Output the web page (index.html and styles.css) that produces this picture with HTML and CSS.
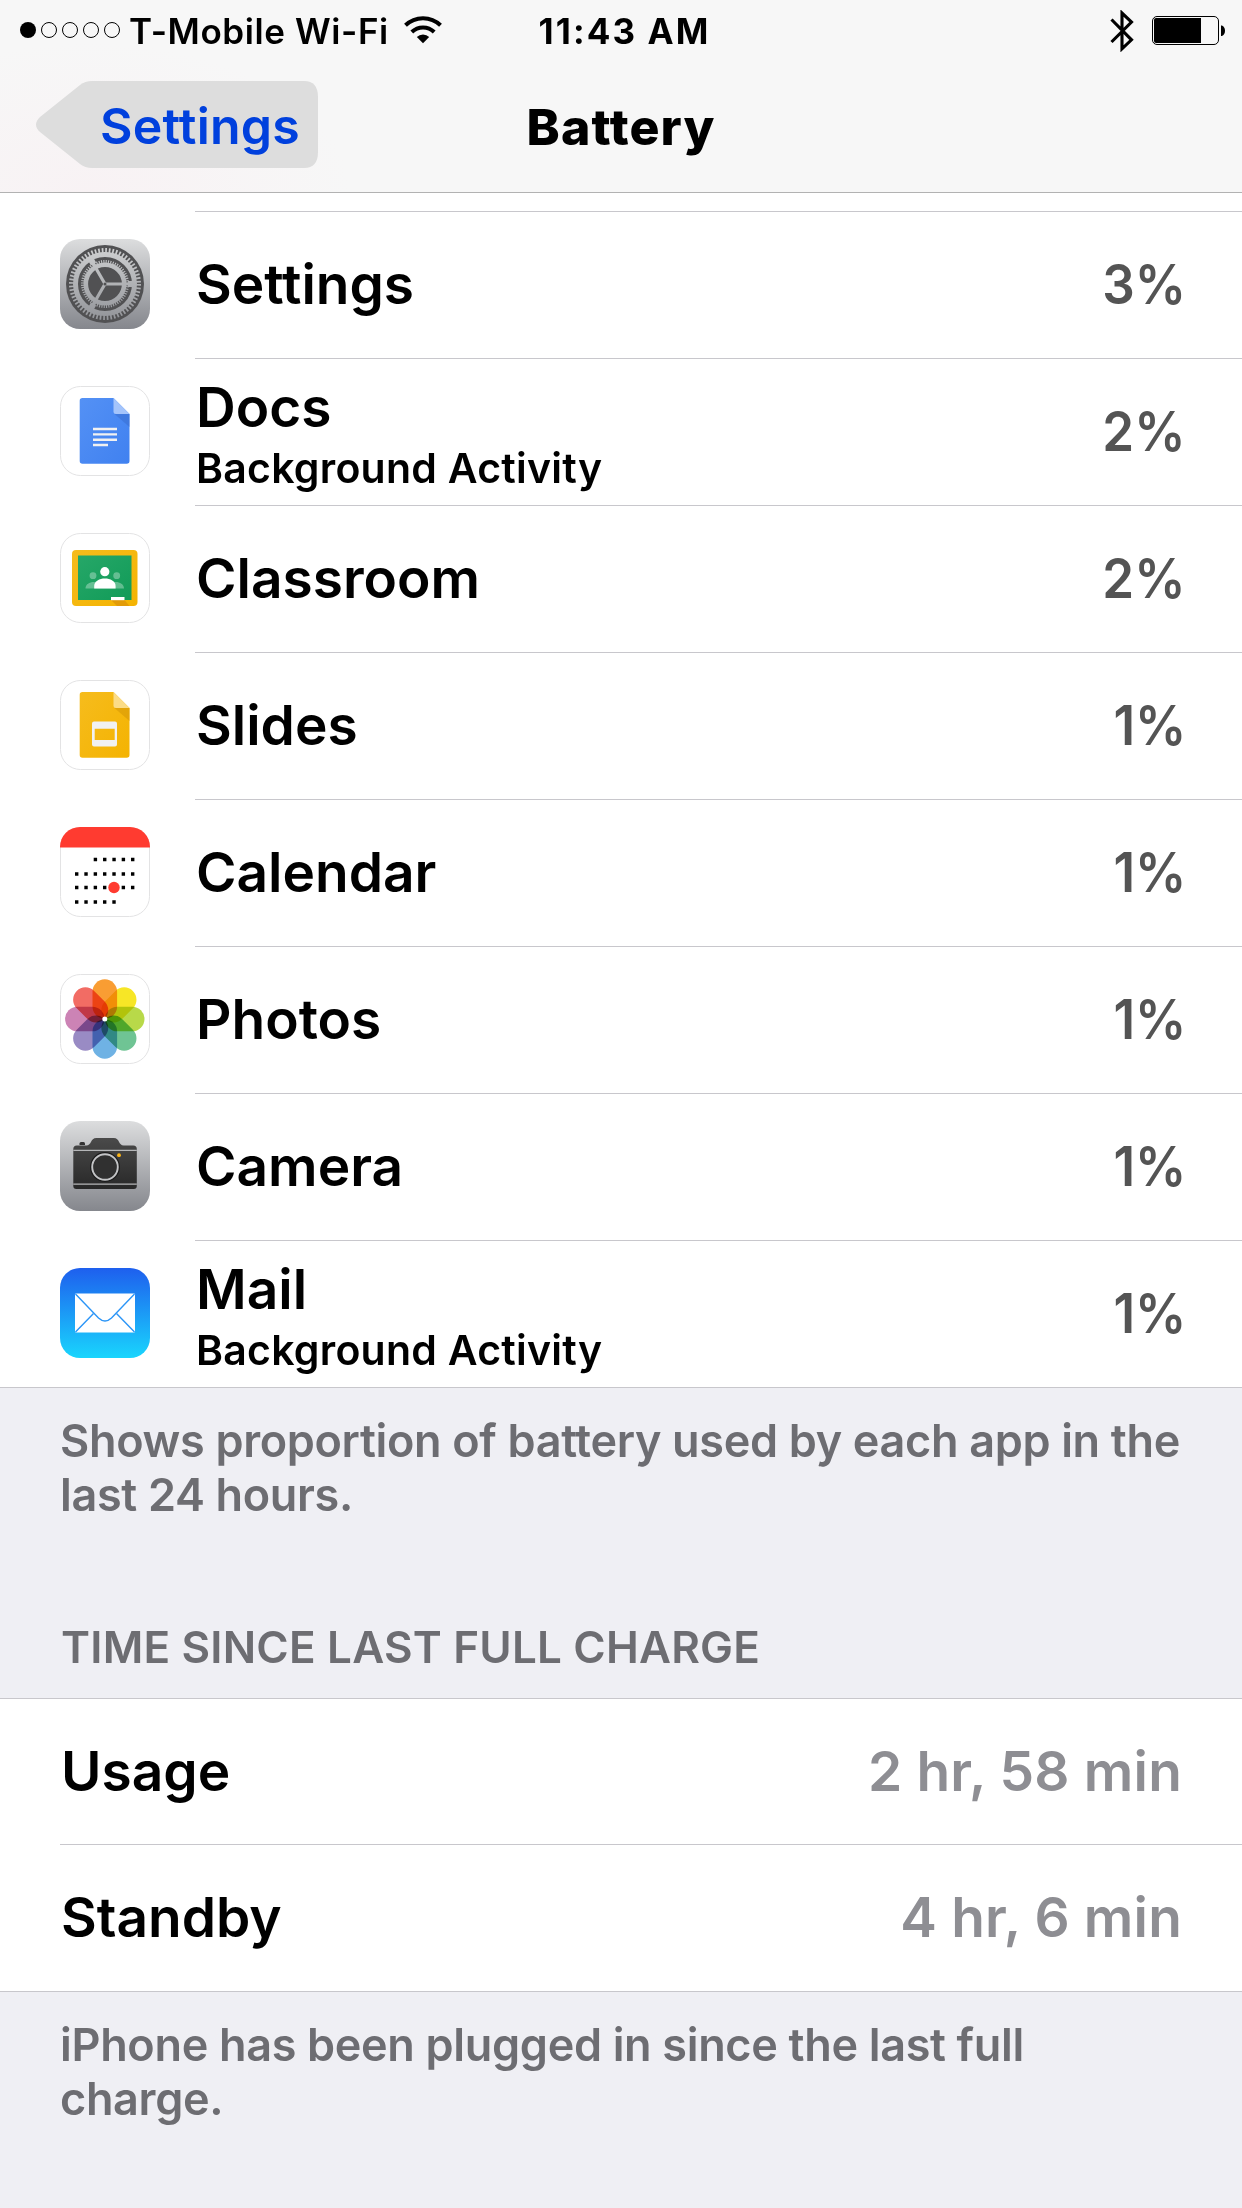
FILE: index.html
```html
<!DOCTYPE html>
<html lang="en">
  <head>
    <meta charset="UTF-8" />
    <title>Battery</title>
    <link rel="stylesheet" href="styles.css">
  </head>
  <body>
    <header class="top">
      <div class="status-bar">
        <div class="status-left">
          <svg class="signal" width="102" height="18" viewBox="0 0 102 18">
            <circle cx="9" cy="9" r="8" />
            <g fill="none" stroke="#000" stroke-width="1">
              <circle cx="30" cy="9" r="7.5" />
              <circle cx="51" cy="9" r="7.5" />
              <circle cx="72" cy="9" r="7.5" />
              <circle cx="93" cy="9" r="7.5" />
            </g>
          </svg>
          <span class="carrier">T-Mobile Wi-Fi</span>
          <svg class="wifi" width="38" height="28" viewBox="0 0 38 28">
            <g fill="none" stroke="#000" stroke-width="4">
              <path d="M1.5 9.3a25 25 0 0 1 35 0" />
              <path d="M7.8 16a16 16 0 0 1 22.4 0" />
            </g>
            <path d="M19 27.3l-6.2-6.3a8.8 8.8 0 0 1 12.4 0z" />
          </svg>
        </div>
        <span class="time">11:43 AM</span>
        <div class="status-right">
          <svg class="bluetooth" width="24" height="42" viewBox="0 0 24 42">
            <path d="M1.5 9.5l20 20.3-9.5 9V3l9.5 9-20 20" fill="none" stroke="#000" stroke-width="3.1" />
          </svg>
          <svg class="battery" width="74" height="30" viewBox="0 0 74 30">
            <rect x=".5" y=".5" width="66" height="28" rx="4.5" fill="none" stroke="#000" />
            <path d="M4 2h45v25H4a2 2 0 0 1-2-2V4a2 2 0 0 1 2-2z" />
            <path d="M69 9.500c5.300 0 5.300 10.500 0 10.500z" />
          </svg>
        </div>
      </div>
      <nav class="nav-bar">
        <a class="back">
          <svg class="back-shape" width="282" height="87" viewBox="0 0 282 87">
            <path d="M56 0H268Q282 0 282 16V71Q282 87 268 87H56Q49 87 44 83L4 51Q-4 43.500 4 36L44 4Q49 0 56 0Z" />
          </svg>
          <span class="back-label">Settings</span>
        </a>
        <h1 class="nav-title">Battery</h1>
      </nav>
    </header>

    <main>
      <ul class="apps">
        <li class="app">
          <svg class="icon" viewBox="0 0 90 90">
            <defs>
              <linearGradient id="gray" x1="0" y1="0" x2="0" y2="1">
                <stop offset="0" stop-color="#dcddde" />
                <stop offset="1" stop-color="#85878d" />
              </linearGradient>
              <linearGradient id="metal" gradientUnits="userSpaceOnUse" x1="0" y1="5" x2="0" y2="85">
                <stop offset="0" stop-color="#d2d3d4" />
                <stop offset="1" stop-color="#8f9196" />
              </linearGradient>
            </defs>
            <rect width="90" height="90" rx="20" fill="url(#gray)" />
            <circle cx="45" cy="45" r="39" fill="#515153" />
            <g fill="none" stroke="url(#metal)">
              <circle cx="45" cy="45" r="33.500" stroke-width="5" stroke-dasharray="1.7 1.808" />
              <circle cx="45" cy="45" r="29.500" stroke-width="5" />
              <circle cx="45" cy="45" r="22.500" stroke-width="3" stroke-dasharray="1.1 1.256" />
              <circle cx="45" cy="45" r="19.200" stroke-width="4.600" />
              <path d="M45 45.010L73 45M45 45L31 20.700M45 45L31 69.300" stroke-width="3.200" />
              <path d="M68 45h6M33.500 25l-3-5.200M33.500 65l-3 5.200" stroke-width="6" />
            </g>
            <circle cx="45" cy="45" r="1.500" fill="#515153" />
          </svg>
          <div class="app-text"><span class="name">Settings</span></div>
          <span class="percent">3%</span>
        </li>
        <li class="app">
          <svg class="icon" viewBox="0 0 90 90">
            <defs>
              <linearGradient id="docs" x1="0" y1="0" x2="1" y2="1">
                <stop offset="0" stop-color="#5491f5" />
                <stop offset="1" stop-color="#4081f0" />
              </linearGradient>
            </defs>
            <rect class="plate" x=".5" y=".5" width="89" height="89" rx="20" />
            <path d="M22.500 12H53.500L69.500 28V75a2.800 2.800 0 0 1-2.800 2.800H22.500a2.800 2.800 0 0 1-2.800-2.800V14.800A2.800 2.800 0 0 1 22.500 12z" fill="url(#docs)" />
            <path d="M54.500 28h15v13z" fill="#3a70d2" opacity=".6" />
            <path d="M53.500 12l16 16H56a2.500 2.500 0 0 1-2.500-2.500z" fill="#a4c4fb" />
            <path d="M33 43h24M33 48.400h24M33 53.800h24M33 59h15" stroke="#f1f1f1" stroke-width="2.400" />
          </svg>
          <div class="app-text">
            <span class="name">Docs</span>
            <span class="detail">Background Activity</span>
          </div>
          <span class="percent">2%</span>
        </li>
        <li class="app">
          <svg class="icon" viewBox="0 0 90 90">
            <defs>
              <linearGradient id="board" x1="0" y1="0" x2="1" y2="1">
                <stop offset="0" stop-color="#26a768" />
                <stop offset="1" stop-color="#119b58" />
              </linearGradient>
              <linearGradient id="amber" x1="0" y1="0" x2="1" y2="1">
                <stop offset="0" stop-color="#f6bc1d" />
                <stop offset="1" stop-color="#f4b301" />
              </linearGradient>
            </defs>
            <rect class="plate" x=".5" y=".5" width="89" height="89" rx="20" />
            <rect x="12" y="17" width="65.500" height="56" rx="4" fill="url(#amber)" />
            <path d="M51 67h13.500l5 6H57z" fill="#e29b08" />
            <rect x="18" y="22.500" width="53.500" height="44.500" fill="url(#board)" />
            <g fill="#fff">
              <g opacity=".32">
                <circle cx="33" cy="42.700" r="3.400" />
                <circle cx="56.700" cy="42.700" r="3.400" />
                <path d="M25.500 55.500c0-6 8-8 13-5.500h12.500c5-2.500 13-.5 13 5.500z" />
              </g>
              <circle cx="44.800" cy="38.700" r="4.600" />
              <path d="M34.200 55.500V53c0-10 21.400-10 21.400 0v2.500z" />
              <path d="M51 64h13.500v3.200H51z" />
            </g>
          </svg>
          <div class="app-text"><span class="name">Classroom</span></div>
          <span class="percent">2%</span>
        </li>
        <li class="app">
          <svg class="icon" viewBox="0 0 90 90">
            <rect class="plate" x=".5" y=".5" width="89" height="89" rx="20" />
            <path d="M22.500 12H53.500L69.500 28V75a2.800 2.800 0 0 1-2.800 2.800H22.500a2.800 2.800 0 0 1-2.800-2.800V14.800A2.800 2.800 0 0 1 22.500 12z" fill="url(#amber)" />
            <path d="M54.500 28h15v13z" fill="#dc9d08" opacity=".7" />
            <path d="M53.500 12l16 16H56a2.500 2.500 0 0 1-2.500-2.500z" fill="#fbdc87" />
            <path d="M34 41.500h21a2 2 0 0 1 2 2V64.500a2 2 0 0 1-2 2H34a2 2 0 0 1-2-2V43.500a2 2 0 0 1 2-2zM34.700 48.700v11.300h20V48.700z" fill="#f1f1f1" fill-rule="evenodd" />
          </svg>
          <div class="app-text"><span class="name">Slides</span></div>
          <span class="percent">1%</span>
        </li>
        <li class="app">
          <svg class="icon" viewBox="0 0 90 90">
            <rect class="plate" x=".5" y=".5" width="89" height="89" rx="20" />
            <path d="M0 20A20 20 0 0 1 20 0H70A20 20 0 0 1 90 20V20.500H0z" fill="#ff3b30" />
            <g fill="none" stroke="#000" stroke-width="3.400" stroke-dasharray="3.400 5.930">
              <path d="M33.700 32.500H76" />
              <path d="M15 47H76" />
              <path d="M15 60.500H76" />
              <path d="M15 75H58" />
            </g>
            <circle cx="54" cy="60.500" r="6.200" fill="#fff" />
            <circle cx="54" cy="60.500" r="5.700" fill="#ff3b30" />
          </svg>
          <div class="app-text"><span class="name">Calendar</span></div>
          <span class="percent">1%</span>
        </li>
        <li class="app">
          <svg class="icon" viewBox="0 0 90 90">
            <rect class="plate" x=".5" y=".5" width="89" height="89" rx="20" />
            <g class="petals" transform="translate(44.800 45)">
              <rect x="-12.300" y="-39.700" width="24.600" height="39.500" rx="12.300" fill="#f99d33" />
              <rect x="-12.300" y="-39.700" width="24.600" height="39.500" rx="12.300" fill="#f7e626" transform="rotate(45)" />
              <rect x="-12.300" y="-39.700" width="24.600" height="39.500" rx="12.300" fill="#b8d949" transform="rotate(90)" />
              <rect x="-12.300" y="-39.700" width="24.600" height="39.500" rx="12.300" fill="#6fc494" transform="rotate(135)" />
              <rect x="-12.300" y="-39.700" width="24.600" height="39.500" rx="12.300" fill="#6fb2e4" transform="rotate(180)" />
              <rect x="-12.300" y="-39.700" width="24.600" height="39.500" rx="12.300" fill="#998bc4" transform="rotate(225)" />
              <rect x="-12.300" y="-39.700" width="24.600" height="39.500" rx="12.300" fill="#cc83b5" transform="rotate(270)" />
              <rect x="-12.300" y="-39.700" width="24.600" height="39.500" rx="12.300" fill="#f26c64" transform="rotate(315)" />
            </g>
            <circle cx="44.800" cy="45" r="2.500" fill="#fff" />
          </svg>
          <div class="app-text"><span class="name">Photos</span></div>
          <span class="percent">1%</span>
        </li>
        <li class="app">
          <svg class="icon" viewBox="0 0 90 90">
            <defs>
              <linearGradient id="camera" x1="0" y1="0" x2="0" y2="1">
                <stop offset="0" stop-color="#4a4a4a" />
                <stop offset="1" stop-color="#282828" />
              </linearGradient>
            </defs>
            <rect width="90" height="90" rx="20" fill="url(#gray)" />
            <path d="M19.500 24v-1.500q0-1.500 1.500-1.500h2.500q1.500 0 1.500 1.500V24z" fill="#333" />
            <path d="M13.300 28q0-3.500 3.500-3.500h9.500c5.500 0 4-7.500 10-7.500h17.500c6 0 4.500 7.500 10 7.500h9.500q3.500 0 3.500 3.500V65q0 3-3 3h-57.500q-3 0-3-3z" fill="url(#camera)" />
            <path d="M13.300 29.300h63.500M13.300 63.200h63.500" stroke="#b5b6b8" stroke-width="1.200" />
            <circle cx="45" cy="46" r="15" fill="#1c1c1c" />
            <circle cx="45" cy="46" r="12.800" fill="#303030" stroke="#c3c4c6" stroke-width="1.900" />
            <circle cx="59" cy="34.200" r="1.900" fill="#fdb515" />
          </svg>
          <div class="app-text"><span class="name">Camera</span></div>
          <span class="percent">1%</span>
        </li>
        <li class="app">
          <svg class="icon" viewBox="0 0 90 90">
            <defs>
              <linearGradient id="mail" x1="0" y1="0" x2="0" y2="1">
                <stop offset="0" stop-color="#1e5fee" />
                <stop offset="1" stop-color="#19d5fd" />
              </linearGradient>
            </defs>
            <rect width="90" height="90" rx="20" fill="url(#mail)" />
            <rect x="15" y="25.500" width="60" height="39" rx="1" fill="#fff" />
            <g fill="none" stroke="#2b95f7" stroke-width="1.400">
              <path d="M15.500 26L38.500 50q6.500 6 13 0L74.500 26" />
              <path d="M15.500 64L33.500 45.500M74.500 64L56.500 45.500" />
            </g>
          </svg>
          <div class="app-text">
            <span class="name">Mail</span>
            <span class="detail">Background Activity</span>
          </div>
          <span class="percent">1%</span>
        </li>
      </ul>
      <p class="note">Shows proportion of battery used by each app in the last 24 hours.</p>

      <h2 class="section-title">TIME SINCE LAST FULL CHARGE</h2>
      <dl class="charge">
        <div class="charge-row">
          <dt class="name">Usage</dt>
          <dd class="value">2 hr, 58 min</dd>
        </div>
        <div class="charge-row">
          <dt class="name">Standby</dt>
          <dd class="value">4 hr, 6 min</dd>
        </div>
      </dl>
      <p class="note">iPhone has been plugged in since the last full charge.</p>
    </main>
  </body>
</html>
```

FILE: styles.css
```css
* {
  box-sizing: border-box;
}
body {
  margin: 0;
  min-height: 2208px;
  background-color: #efeff4;
  color: #000;
  font-family: Inter, "Liberation Sans", sans-serif;
  font-weight: 600;
}
h1, h2, p, ul, dl, dd {
  margin: 0;
  padding: 0;
}
.top {
  height: 193px;
  border-bottom: 1px solid #b2b2b2;
  background: radial-gradient(ellipse 260px 150px at 90px 193px, #f8f2f4, #f7f7f7);
}
.status-bar {
  display: grid;
  grid-template-columns: 1fr auto 1fr;
  align-items: center;
  height: 62px;
  padding: 0 16px 0 19px;
  font-size: 35px;
}
.status-left, .status-right {
  display: flex;
  align-items: center;
}
.status-right {
  justify-content: flex-end;
  gap: 18px;
}
.signal {
  margin-bottom: 2px;
}
.carrier {
  margin-left: 8px;
  letter-spacing: 0.6px;
}
.wifi {
  margin-left: 15px;
  margin-bottom: 3px;
}
.time {
  padding-left: 4px;
  font-weight: 700;
  letter-spacing: 2.1px;
}
.nav-bar {
  display: grid;
  grid-template-columns: 1fr auto 1fr;
  align-items: center;
  height: 125px;
  padding: 0 36px;
}
.back {
  position: relative;
  display: flex;
  align-items: center;
  width: 282px;
  height: 87px;
  padding-left: 64px;
  color: #0040dd;
  font-size: 50px;
  letter-spacing: 0.2px;
}
.back-shape {
  position: absolute;
  left: 0;
  top: 0;
  fill: #dddddd;
}
.back-label {
  position: relative;
  padding-top: 2px;
}
.nav-title {
  padding-top: 4px;
  font-size: 50px;
  font-weight: 800;
  letter-spacing: 1.1px;
}
.apps {
  padding-top: 18px;
  border-bottom: 1px solid #c8c7cc;
  background-color: #fff;
  list-style: none;
}
.app {
  display: flex;
  align-items: center;
  height: 147px;
  padding: 0 60px;
  background: linear-gradient(#c8c7cc, #c8c7cc) 195px 0 / 100% 1px no-repeat;
}
.icon {
  flex: none;
  width: 90px;
  height: 90px;
  margin: 0 46px 2px 0;
}
.plate {
  fill: #fff;
  stroke: #e3e3e4;
}
.petals rect {
  mix-blend-mode: multiply;
}
.app-text {
  display: flex;
  flex: 1;
  flex-direction: column;
}
.name {
  font-size: 55px;
  line-height: 73px;
}
.detail {
  font-size: 41px;
  letter-spacing: 0.25px;
  line-height: 48px;
}
.percent {
  margin-right: -4px;
  color: #545454;
  font-size: 55px;
  line-height: 73px;
  transform: scaleX(0.93);
  transform-origin: right;
}
.note {
  padding: 26px 50px 0 60px;
  color: #6d6d72;
  font-size: 45px;
  letter-spacing: -0.33px;
  line-height: 54px;
}
.section-title {
  height: 176px;
  padding: 99px 60px 0 61px;
  color: #6d6d72;
  font-size: 44px;
  font-weight: 600;
  letter-spacing: 0.2px;
  line-height: 52px;
}
.charge {
  border-top: 1px solid #c8c7cc;
  border-bottom: 1px solid #c8c7cc;
  background-color: #fff;
}
.charge-row {
  display: flex;
  align-items: center;
  justify-content: space-between;
  height: 145px;
  padding: 0 60px 0 61px;
}
.charge-row + .charge-row {
  height: 147px;
  background: linear-gradient(#c8c7cc, #c8c7cc) 60px 0 / 100% 1px no-repeat;
}
.value {
  color: #8e8e93;
  font-size: 55px;
  letter-spacing: 0.2px;
  line-height: 73px;
}
```
